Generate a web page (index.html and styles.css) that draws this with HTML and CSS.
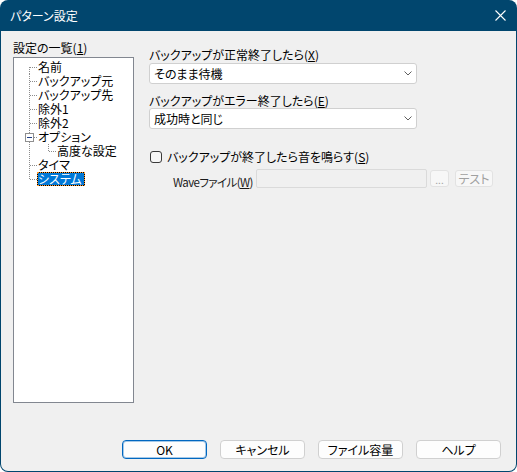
FILE: index.html
```html
<!DOCTYPE html>
<html lang="ja">
<head>
<meta charset="utf-8">
<title>パターン設定</title>
<link rel="stylesheet" href="styles.css">
</head>
<body>
<div class="window">
  <div class="titlebar">
    <span class="title">パターン設定</span>
    <svg class="close" width="11" height="11" viewBox="0 0 11 11"><path d="M0.5 0.5L10.5 10.5M10.5 0.5L0.5 10.5" stroke="#fff" stroke-width="1.1" fill="none"/></svg>
  </div>
  <div class="content">
    <div class="main">
      <div class="left">
        <div class="label">設定の一覧(<u>1</u>)</div>
        <div class="tree">
          <div class="row"><svg class="g" width="23" height="14"><path d="M15.5 7V14M16 7.5H23"/></svg><span class="txt">名前</span></div>
          <div class="row"><svg class="g" width="23" height="14"><path d="M15.5 0V14M16 7.5H23"/></svg><span class="txt">バックアップ元</span></div>
          <div class="row"><svg class="g" width="23" height="14"><path d="M15.5 0V14M16 7.5H23"/></svg><span class="txt">バックアップ先</span></div>
          <div class="row"><svg class="g" width="23" height="14"><path d="M15.5 0V14M16 7.5H23"/></svg><span class="txt">除外1</span></div>
          <div class="row"><svg class="g" width="23" height="14"><path d="M15.5 0V14M16 7.5H23"/></svg><span class="txt">除外2</span></div>
          <div class="row"><svg class="g" width="23" height="14"><path d="M15.5 0V3M15.5 12V14M20 7.5H23"/><rect class="box" x="11.5" y="3.5" width="8" height="8"/><path class="minus" d="M13 7.5H18"/></svg><span class="txt">オプション</span></div>
          <div class="row"><svg class="g" width="42" height="14"><path d="M15.5 0V14M34.5 0V7M35 7.5H42"/></svg><span class="txt">高度な設定</span></div>
          <div class="row"><svg class="g" width="23" height="14"><path d="M15.5 0V14M16 7.5H23"/></svg><span class="txt">タイマ</span></div>
          <div class="row"><svg class="g" width="23" height="14"><path d="M15.5 0V7M16 7.5H23"/></svg><span class="txt sel">システム</span></div>
        </div>
      </div>
      <div class="right">
        <div class="label l1">バックアップが正常終了したら(<u>X</u>)</div>
        <div class="combo"><span>そのまま待機</span><svg width="8" height="5" viewBox="0 0 8 5"><path d="M0.5 0.5L4 4L7.5 0.5" stroke="#5f5f5f" fill="none"/></svg></div>
        <div class="label l2">バックアップがエラー終了したら(<u>E</u>)</div>
        <div class="combo"><span>成功時と同じ</span><svg width="8" height="5" viewBox="0 0 8 5"><path d="M0.5 0.5L4 4L7.5 0.5" stroke="#5f5f5f" fill="none"/></svg></div>
        <div class="check-row"><span class="checkbox"></span><span>バックアップが終了したら音を鳴らす(<u>S</u>)</span></div>
        <div class="wave-row">
          <span class="wave-label">Waveファイル(<u>W</u>)</span>
          <span class="input"></span>
          <span class="sbtn dots">...</span>
          <span class="sbtn test">テスト</span>
        </div>
      </div>
    </div>
    <div class="footer">
      <div class="btn default">OK</div>
      <div class="btn">キャンセル</div>
      <div class="btn">ファイル容量</div>
      <div class="btn">ヘルプ</div>
    </div>
  </div>
</div>
</body>
</html>
```

FILE: styles.css
```css
* { box-sizing: border-box; }
html, body {
  margin: 0;
  padding: 0;
  background: #ffffff;
}
body {
  font-family: "Noto Sans CJK JP", "Noto Sans", sans-serif;
  font-size: 12px;
  font-feature-settings: "palt";
  color: #000;
}
u { text-decoration: underline; text-underline-offset: 1px; }
.window {
  width: 517px;
  height: 472px;
  display: flex;
  flex-direction: column;
  border-radius: 8px;
  overflow: hidden;
  background: #01466e;
}
.titlebar {
  height: 31px;
  flex: none;
  display: flex;
  align-items: center;
  padding-left: 10px;
  padding-right: 11px;
  color: #fff;
}
.title { font-size: 12px; line-height: 16px; }
.close { margin-left: auto; }
.content {
  flex: 1;
  background: #f0f0f0;
  margin: 0 1px 1px 1px;
  border-radius: 0 0 7px 7px;
  display: flex;
  flex-direction: column;
  padding: 9px 0 12px 12px;
}
.main { display: flex; }
.left { width: 121px; flex: none; }
.label { line-height: 16px; height: 16px; white-space: nowrap; }
.tree {
  margin-top: 1px;
  height: 346px;
  background: #fff;
  border: 1px solid #828790;
  padding-top: 2px;
}
.row {
  height: 14px;
  display: flex;
  align-items: center;
  line-height: 14px;
  white-space: nowrap;
}
.g { flex: none; display: block; }
.g path { stroke: #8c8c8c; stroke-width: 1; stroke-dasharray: 1 1; fill: none; }
.g .box { fill: #fff; stroke: #8f8f8f; stroke-dasharray: none; }
.g .minus { stroke: #213f86; stroke-dasharray: none; }
.txt { padding-left: 1px; }
.sel {
  display: inline-block;
  line-height: 12px;
  height: 14px;
  padding: 0 2px 0 0;
  color: #fff;
  background: #000;
  box-shadow: inset 0 0 0 20px #0078d7;
  border: 1px dotted #ff9a2e;
}
.right {
  margin-left: 15px;
  padding-top: 7px;
  flex: 1;
}
.l1 { height: 16px; }
.l2 { margin-top: 9px; height: 15px; line-height: 15px; }
.combo {
  width: 268px;
  height: 21px;
  background: #fff;
  border: 1px solid #d0d0d0;
  border-radius: 3px;
  display: flex;
  align-items: center;
  justify-content: space-between;
  padding: 0 4px 0 4px;
  line-height: 16px;
}
.combo svg { margin-right: 0; display: block; }
.check-row {
  margin-top: 20px;
  height: 16px;
  display: flex;
  align-items: center;
  line-height: 16px;
}
.checkbox {
  width: 12px;
  height: 12px;
  margin-left: 1px;
  margin-right: 5px;
  border: 1px solid #3a3a3a;
  border-radius: 3px;
  background: #f7f7f7;
  flex: none;
}
.wave-row {
  margin-top: 4px;
  height: 19px;
  display: flex;
  align-items: center;
}
.wave-label {
  margin-left: 24px;
  width: 83px;
  flex: none;
  line-height: 16px;
  margin-top: 6px;
  white-space: nowrap;
  color: #1a1a1a;
  letter-spacing: -0.6px;
  font-size: 11.5px;
}
.input {
  width: 171px;
  height: 19px;
  border: 1px solid #dadada;
  border-radius: 2px;
  background: #f0f0f0;
  flex: none;
}
.sbtn {
  height: 17px;
  border: 1px solid #e2e2e2;
  border-radius: 3px;
  background: #f7f7f7;
  color: #a0a0a0;
  display: flex;
  align-items: center;
  justify-content: center;
  line-height: 14px;
  flex: none;
}
.dots { width: 19px; margin-left: 3px; font-size: 10px; padding-top: 2px; }
.test { width: 38px; margin-left: 6px; }
.footer {
  margin-top: auto;
  display: flex;
  gap: 13px;
  padding-left: 109px;
}
.btn {
  width: 85px;
  height: 19px;
  border: 1px solid #d0d0d0;
  border-radius: 4px;
  background: #fdfdfd;
  display: flex;
  align-items: center;
  justify-content: center;
  line-height: 16px;
}
.btn.default {
  border: 1px solid #0067c0;
  box-shadow: inset 0 0 0 1px rgba(0, 103, 192, 0.35);
}
```
